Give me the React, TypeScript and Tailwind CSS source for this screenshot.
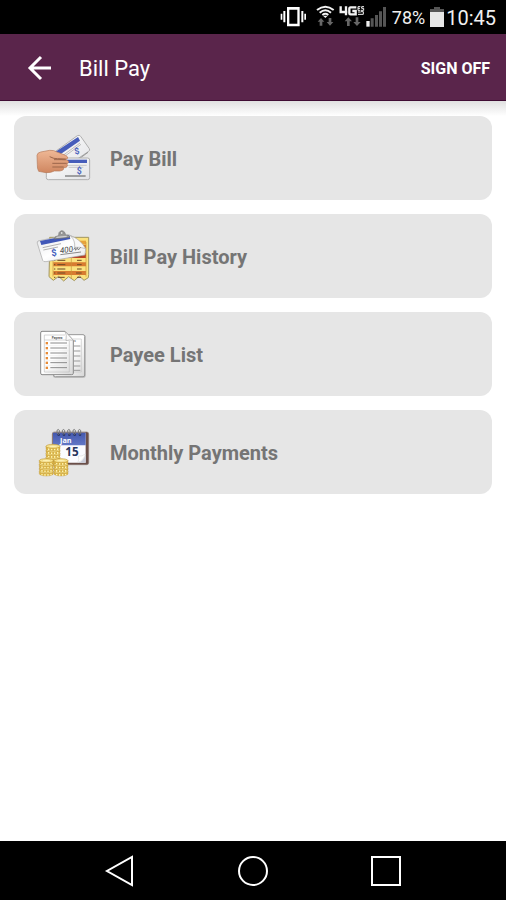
import React from "react";

function VibrateIcon() {
  return (
    <svg width="28" height="24" viewBox="0 0 84 72" fill="#fff" aria-hidden="true">
      <path fillRule="evenodd" d="M21 9h38v58H21zM28 17v42h24V17z" />
      <path d="M10 21h6v34h-6zM2 29h5v18H2zM64 21h6v34h-6zM73 29h5v18h-5z" />
    </svg>
  );
}

function WifiIcon() {
  return (
    <svg width="20" height="24" viewBox="0 0 60 72" aria-hidden="true">
      <g fill="none" stroke="#f2f2f2" strokeWidth="6">
        <path d="M6 18Q31 -2 56 18" />
        <path d="M14 26Q31 12 48 26" />
        <path d="M22 33Q31 26 40 33" />
      </g>
      <path d="M24 35h14l-7 7z" fill="#f2f2f2" />
      <path d="M18 42l10 11h-6v12h-8V53H8zM45 65L35 54h6V42h8v12h6z" fill="#666" />
    </svg>
  );
}

function NetworkIcon() {
  return (
    <svg width="26" height="24" viewBox="0 0 78 72" aria-hidden="true">
      <g fill="none" stroke="#f2f2f2">
        <path d="M5 7v17h20M21 7v27M52 10H35q-4 0-4 4v13q0 4 4 4h15V21H40" strokeWidth="7" />
        <path d="M64 8h-7v11h7M57 13h6M75 8h-7v5h6v6h-8M57 24h8M57 31h16v-8h-7" strokeWidth="3" />
      </g>
      <path d="M28 40l11 12h-7v14h-8V52h-7zM54 66L43 54h7V40h8v14h7z" fill="#666" />
    </svg>
  );
}

function SignalIcon() {
  return (
    <svg width="22" height="24" viewBox="0 0 66 72" fill="#555" aria-hidden="true">
      <path d="M1 51h10v17H1z" fill="#eee" />
      <path d="M14 43h9v25h-9zM27 33h9v35h-9zM39 22h9v46h-9zM51 9h9v59h-9z" />
    </svg>
  );
}

function BatteryIcon() {
  return (
    <svg width="14" height="24" viewBox="0 0 42 72" aria-hidden="true">
      <path d="M12 9h18v6h12v12H0V15h12z" fill="#555" />
      <path d="M0 24h42v45H0z" fill="#e6e6e6" />
    </svg>
  );
}

function PayBillIcon() {
  return (
    <svg width="70" height="66" viewBox="0 0 210 198" className="shrink-0" aria-hidden="true">
      <defs>
        <linearGradient id="check" x1="0" y1="0" x2="1" y2="1">
          <stop stopColor="#fff" />
          <stop offset="1" stopColor="#e2e3e6" />
        </linearGradient>
        <linearGradient id="skin" x1="0" y1="0" x2="0" y2="1">
          <stop stopColor="#efb896" />
          <stop offset="1" stopColor="#cf8660" />
        </linearGradient>
      </defs>
      <path d="M56 94L142 32q6-3 10 2l26 37q3 5-2 8L96 133z" fill="url(#check)" stroke="#b0b0b0" strokeWidth="3" />
      <path d="M62 90L144 36l6 11L75 99z" fill="#465dba" />
      <path d="M95 94l55-40M104 94l49-36" stroke="#a0a0a0" strokeWidth="2" />
      <path d="M144 104l30-22" stroke="#777" strokeWidth="2" />
      <text x="133" y="87" transform="rotate(-12 140 78)" fontFamily="Roboto, sans-serif" fontSize="26" fontWeight="700" fill="#5268be">$</text>
      <rect x="49" y="99" width="130" height="65" rx="6" fill="url(#check)" stroke="#b0b0b0" strokeWidth="3" />
      <path d="M105 104h66v10h-66z" fill="#465dba" />
      <path d="M108 121h62M116 127h44" stroke="#b0b0b0" strokeWidth="2" />
      <path d="M105 153h62" stroke="#555" strokeWidth="3" />
      <text x="140" y="146" fontFamily="Roboto, sans-serif" fontSize="26" fontWeight="700" fill="#5268be">$</text>
      <path d="M21 91q1-8 11-10l27-5q13-1 22 5l26 10q9 5 5 10-5 4-26 2l25 2q7 4 4 8-1 3-5 3 5 5 1 9-3 4-10 3 1 6-4 8-3 3-24 2-11 6-25 5l-22-4q-5-8-4-21z" fill="url(#skin)" stroke="#b57a5b" strokeWidth="2" />
      <path d="M59 95q13 7 24 6l24 1M72 104h35M67 115h43M67 126h34" fill="none" stroke="#9c664b" strokeWidth="3" />
    </svg>
  );
}

function HistoryIcon() {
  return (
    <svg width="70" height="66" viewBox="0 3 210 198" className="shrink-0" aria-hidden="true">
      <defs>
        <linearGradient id="historyCheck" x1="0" y1="0" x2="1" y2="1">
          <stop stopColor="#e4e5e8" />
          <stop offset=".5" stopColor="#fff" />
          <stop offset="1" stopColor="#e4e5e7" />
        </linearGradient>
      </defs>
      <path d="M59 85V46h117v112l-1 9-13 8-14-13-15 14-17-12-15 13-15-14-16 12-13-11z" fill="#fbe27e" stroke="#a29662" strokeWidth="3" />
      <path d="M124 56h44v10h-44z" fill="#e7a33b" />
      <path d="M124 68h44v13h-44z" fill="#d87b30" />
      <path d="M70 94h98v14H70z" fill="#bd4325" />
      <path d="M70 121h98v12H70zM70 147h98v12H70z" fill="#d87b30" />
      <path d="M124 60v111M69 108v56M168 60v104" stroke="#c9963a" strokeWidth="2" />
      <path d="M72 115h4M82 115h24M141 115h14M72 128h4M82 128h24M141 128h14M72 141h4M82 141h24M141 141h14M72 153h4M82 153h24M138 153h17M72 166h4M84 166h20M141 166h12M138 102h17" stroke="#6b4a28" strokeWidth="3" />
      <path d="M24 57l92-19q10 3 25 15l26 27-2 19L48 119q-8 1-10-4L22 64q-1-5 2-7z" fill="url(#historyCheck)" stroke="#a5a5a5" strokeWidth="2" />
      <path d="M30 57l88-17 3 11-87 18z" fill="#4057b8" />
      <path d="M38 77l55-12M40 84l44-9" stroke="#8c8c8c" strokeWidth="2" />
      <path d="M122 42q27 7 45 38-19-6-33-4 2-21-12-34z" fill="#f8f8f8" stroke="#aaa" strokeWidth="2" />
      <path d="M72 51q2-9 14-10l1-9q8-12 18 0l1 7q13 0 13 7z" fill="#999" stroke="#737373" strokeWidth="2" />
      <circle cx="95" cy="33" r="4" fill="#dedede" stroke="#555" />
      <path d="M79 46l31-3" stroke="#d0d0d0" strokeWidth="4" />
      <text x="64" y="102" transform="rotate(-8 72 94)" fontFamily="Roboto, sans-serif" fontSize="28" fontWeight="700" fill="#4561bd">$</text>
      <text x="91" y="94" transform="rotate(-7 92 96)" fontFamily="Roboto, sans-serif" fontStyle="italic" fontSize="24" fill="#444">400</text>
      <path d="M91 98l62-8M131 83l4-6 2 8 5-8 3 7 7-8" fill="none" stroke="#555" strokeWidth="2" />
    </svg>
  );
}

function PayeeIcon() {
  const rows = [63, 78, 93, 108, 122, 137];
  return (
    <svg width="70" height="66" viewBox="0 -3 210 198" className="shrink-0" aria-hidden="true">
      <defs>
        <linearGradient id="paper" x1="0" y1="0" x2="1" y2="1">
          <stop offset=".5" stopColor="#fff" />
          <stop offset="1" stopColor="#d6d6d6" />
        </linearGradient>
      </defs>
      <rect x="69" y="38" width="98" height="129" rx="6" fill="#b5b5b5" />
      <rect x="71" y="38" width="93" height="126" rx="5" fill="url(#paper)" stroke="#999" strokeWidth="3" />
      <path d="M128 51h26v99h-28" fill="none" stroke="#c5c5c5" strokeWidth="2" />
      <path d="M132 72h19M132 87h19M132 102h19M132 117h19M132 132h19M132 145h19" stroke="#999" strokeWidth="3" />
      <text x="123" y="61" fontFamily="Roboto, sans-serif" fontSize="9" fill="#555">ees</text>
      <path d="M36 28h69l25 27v99q0 4-5 4H36q-4 0-4-5V33q0-5 4-5z" fill="url(#paper)" stroke="#898989" strokeWidth="3" />
      <path d="M43 39h62M43 39v111h75V56M43 54h75" fill="none" stroke="#c0c0c0" strokeWidth="2" />
      <text x="65" y="51" fontFamily="Roboto, sans-serif" fontSize="10" fontWeight="700" fill="#555">Payees</text>
      {rows.map((y) => (
        <g key={y}>
          <path d={`M47 ${y - 3}h7v7h-7z`} fill="#e88b36" />
          <path d={`M61 ${y}h50`} stroke="#8a8a8a" strokeWidth="3" />
          <path d={`M43 ${y + 8}h75`} stroke="#ddd" strokeWidth="1" />
        </g>
      ))}
      <path d="M105 28l25 27q-12-3-22 1 3-18-3-28z" fill="#fafafa" stroke="#aaa" strokeWidth="2" />
    </svg>
  );
}

function CoinStack({ x, top, count }: { x: number; top: number; count: number }) {
  return (
    <g>
      {Array.from({ length: count }, (_, i) => top + (count - 1 - i) * 11).map((y) => (
        <g key={y}>
          <path d={`M${x - 21} ${y}v6a21 7 0 0 0 42 0v-6z`} fill="#dfb845" stroke="#ad8630" />
          <path d={`M${x - 13} ${y + 6}v5M${x - 4} ${y + 7}v5M${x + 5} ${y + 7}v5M${x + 14} ${y + 6}v5`} stroke="#fff5b4" strokeWidth="4" />
          <ellipse cx={x} cy={y} rx="21" ry="6" fill="#f9e58d" stroke="#c49c3c" strokeWidth="2" />
        </g>
      ))}
      <ellipse cx={x} cy={top} rx="13" ry="3" fill="#fff5b9" stroke="#ddb958" />
    </g>
  );
}

function MonthlyIcon() {
  const rings = [86, 102, 118, 134, 150];
  return (
    <svg width="70" height="66" viewBox="0 -3 210 198" className="shrink-0" aria-hidden="true">
      <defs>
        <linearGradient id="monthHeader" x1="0" y1="0" x2="0" y2="1">
          <stop stopColor="#4357ad" />
          <stop offset="1" stopColor="#6277c6" />
        </linearGradient>
      </defs>
      <rect x="67" y="36" width="109" height="98" rx="6" fill="#6b4f49" stroke="#8a7774" strokeWidth="2" />
      <path d="M69 38h98v90H69z" fill="#fbfbff" />
      <path d="M69 38h98v38H69z" fill="url(#monthHeader)" />
      <path d="M167 101v27h-24q19-4 24-27z" fill="#c9ccd9" />
      <path d="M143 128q6-9 2-20 11 3 22-7-7 21-24 27z" fill="#fff" stroke="#bbb" />
      {rings.map((x) => (
        <g key={x}>
          <circle cx={x} cy="44" r="4" fill="#29366c" />
          <path d={`M${x} 44q-7-4-5-13 4-5 7 0v11`} fill="none" stroke="#777" strokeWidth="3" />
        </g>
      ))}
      <text x="90" y="68" fontFamily="Open Sans, sans-serif" fontSize="22" fontWeight="700" fill="#fff">Jan</text>
      <text x="106" y="108" fontFamily="Open Sans, sans-serif" fontSize="35" fontWeight="700" fill="#26345d">15</text>
      <CoinStack x={69} top={79} count={5} />
      <CoinStack x={49} top={122} count={4} />
      <CoinStack x={93} top={122} count={4} />
    </svg>
  );
}

const items = [
  { label: "Pay Bill", Icon: PayBillIcon },
  { label: "Bill Pay History", Icon: HistoryIcon },
  { label: "Payee List", Icon: PayeeIcon },
  { label: "Monthly Payments", Icon: MonthlyIcon },
];

export default function App() {
  return (
    <div className="flex min-h-screen flex-col bg-white font-['Roboto',sans-serif]">
      <div className="flex h-[34px] items-center justify-end bg-black pr-[10px] pb-0.5 text-[#f0f0f0]">
        <VibrateIcon />
        <span className="ml-[7px] flex"><WifiIcon /></span>
        <span className="ml-1 flex"><NetworkIcon /></span>
        <span className="ml-px flex"><SignalIcon /></span>
        <span className="ml-1 pt-1 text-lg leading-6">78%</span>
        <span className="ml-[5px] flex"><BatteryIcon /></span>
        <span className="ml-0.5 pt-1 text-xl leading-6">10:45</span>
      </div>

      <header className="flex h-[67px] items-center border-b border-[#3f0c33] bg-[#5a254b] pt-0.5 pr-4 pl-6 text-white">
        <button type="button" aria-label="Back" className="flex size-8 items-center justify-center">
          <svg width="32" height="32" viewBox="0 0 32 32" fill="none" stroke="#fff" strokeWidth="3" aria-hidden="true">
            <path d="M27 16H6M17 5L6 16l11 11" />
          </svg>
        </button>
        <h1 className="ml-[23px] pt-0.5 text-[22px] leading-8 font-normal">Bill Pay</h1>
        <button type="button" className="ml-auto pt-0.5 text-base leading-6 font-bold">SIGN OFF</button>
      </header>

      <main className="flex-1">
        <div className="h-[15px] bg-gradient-to-b from-[#e0e0e0] to-white" />
        <nav className="flex flex-col gap-[14px] px-[14px] pb-[14px]">
          {items.map(({ label, Icon }) => (
            <button key={label} type="button" className="flex h-[84px] w-full items-center rounded-xl bg-[#e6e6e6] pl-4 text-left">
              <Icon />
              <span className="ml-[10px] pt-0.5 text-xl leading-6 font-bold text-[#757575]">{label}</span>
            </button>
          ))}
        </nav>
      </main>

      <footer className="flex h-[59px] items-center justify-center gap-[101px] bg-black">
        <button type="button" aria-label="Back">
          <svg width="32" height="32" viewBox="0 0 32 32" fill="none" stroke="#fff" strokeWidth="2" aria-hidden="true">
            <path d="M28 2v28L3 16z" />
          </svg>
        </button>
        <button type="button" aria-label="Home">
          <svg width="32" height="32" viewBox="0 0 32 32" fill="none" stroke="#fff" strokeWidth="2" aria-hidden="true">
            <circle cx="16" cy="16" r="14" />
          </svg>
        </button>
        <button type="button" aria-label="Recent apps">
          <svg width="32" height="32" viewBox="0 0 32 32" fill="none" stroke="#fff" strokeWidth="2" aria-hidden="true">
            <path d="M2 2h28v28H2z" />
          </svg>
        </button>
      </footer>
    </div>
  );
}
